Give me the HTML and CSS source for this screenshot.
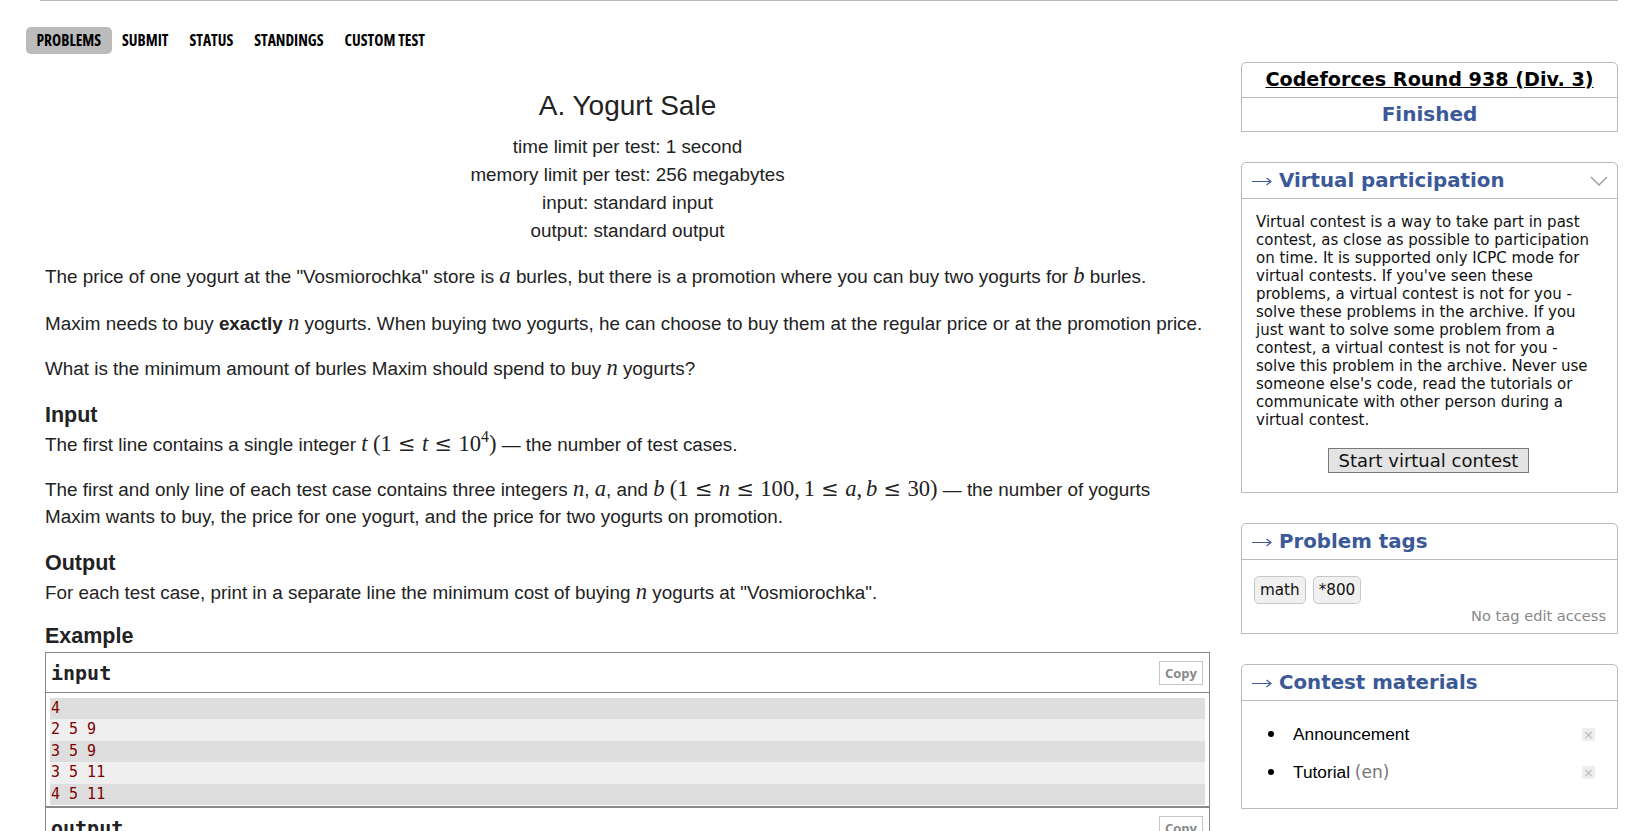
FILE: index.html
```html
<!DOCTYPE html>
<html lang="en">
<head>
<meta charset="utf-8">
<title>A. Yogurt Sale</title>
<link rel="stylesheet" href="styles.css">
</head>
<body>
<div class="topline"></div>
<nav class="menu">
  <ul>
    <li><a class="active" href="#">Problems</a></li>
    <li><a href="#">Submit</a></li>
    <li><a href="#">Status</a></li>
    <li><a href="#">Standings</a></li>
    <li><a href="#">Custom test</a></li>
  </ul>
</nav>
<div class="layout">
  <main class="statement">
    <div class="header">
      <div class="title">A. Yogurt Sale</div>
      <div class="meta">time limit per test: 1 second</div>
      <div class="meta">memory limit per test: 256 megabytes</div>
      <div class="meta">input: standard input</div>
      <div class="meta">output: standard output</div>
    </div>
    <p class="p-first">The price of one yogurt at the "Vosmiorochka" store is <span class="mj"><i>a</i></span> burles, but there is a promotion where you can buy two yogurts for <span class="mj"><i>b</i></span> burles.</p>
    <p>Maxim needs to buy <b>exactly</b> <span class="mj"><i>n</i></span> yogurts. When buying two yogurts, he can choose to buy them at the regular price or at the promotion price.</p>
    <p>What is the minimum amount of burles Maxim should spend to buy <span class="mj"><i>n</i></span> yogurts?</p>

    <div class="section-title">Input</div>
    <p>The first line contains a single integer <span class="mj"><i>t</i></span> <span class="mj">(1<span class="rel">≤</span><i>t</i><span class="rel">≤</span>10<sup>4</sup>)</span> — the number of test cases.</p>
    <p>The first and only line of each test case contains three integers <span class="mj"><i>n</i></span>, <span class="mj"><i>a</i></span>, and <span class="mj"><i>b</i></span> <span class="mj">(1<span class="rel">≤</span><i>n</i><span class="rel">≤</span>100<span class="punct">,</span>1<span class="rel">≤</span><i>a</i><span class="punct">,</span><i>b</i><span class="rel">≤</span>30)</span> — the number of yogurts Maxim wants to buy, the price for one yogurt, and the price for two yogurts on promotion.</p>

    <div class="section-title">Output</div>
    <p class="p-last">For each test case, print in a separate line the minimum cost of buying <span class="mj"><i>n</i></span> yogurts at "Vosmiorochka".</p>

    <div class="section-title">Example</div>
    <div class="sample">
      <div class="io">
        <div class="io-title"><span>input</span><button class="copy" type="button">Copy</button></div>
        <pre class="io-body"><div class="row odd">4</div><div class="row even">2 5 9</div><div class="row odd">3 5 9</div><div class="row even">3 5 11</div><div class="row odd">4 5 11</div></pre>
      </div>
      <div class="io io-out">
        <div class="io-title"><span>output</span><button class="copy" type="button">Copy</button></div>
        <pre class="io-body"><div class="row">9</div><div class="row">14</div><div class="row">15</div><div class="row">20</div></pre>
      </div>
    </div>
  </main>

  <aside class="sidebar">
    <div class="box">
      <div class="round"><a href="#">Codeforces Round 938 (Div. 3)</a></div>
      <div class="phase">Finished</div>
    </div>

    <div class="box">
      <div class="caption">
        <svg class="arrow" width="20" height="10" viewBox="0 0 20 10"><path d="M0 5.5H18.5M14.5 2L19 5.5L14.5 9" fill="none" stroke="#3b5998" stroke-width="1.2"/></svg>
        <span class="cap-text">Virtual participation</span>
        <svg class="chevron" width="18" height="10" viewBox="0 0 18 10"><polyline points="1,1 9,9 17,1" fill="none" stroke="#9a9a9a" stroke-width="1.3"/></svg>
      </div>
      <div class="virtual">
        <div class="virtual-text">Virtual contest is a way to take part in past contest, as close as possible to participation on time. It is supported only ICPC mode for virtual contests. If you've seen these problems, a virtual contest is not for you - solve these problems in the archive. If you just want to solve some problem from a contest, a virtual contest is not for you - solve this problem in the archive. Never use someone else's code, read the tutorials or communicate with other person during a virtual contest.</div>
        <div class="btn-wrap"><button class="start" type="button">Start virtual contest</button></div>
      </div>
    </div>

    <div class="box">
      <div class="caption">
        <svg class="arrow" width="20" height="10" viewBox="0 0 20 10"><path d="M0 5.5H18.5M14.5 2L19 5.5L14.5 9" fill="none" stroke="#3b5998" stroke-width="1.2"/></svg>
        <span class="cap-text">Problem tags</span>
      </div>
      <div class="tags">
        <div class="tag-list"><span class="tag">math</span><span class="tag">*800</span></div>
        <div class="tag-note">No tag edit access</div>
      </div>
    </div>

    <div class="box">
      <div class="caption">
        <svg class="arrow" width="20" height="10" viewBox="0 0 20 10"><path d="M0 5.5H18.5M14.5 2L19 5.5L14.5 9" fill="none" stroke="#3b5998" stroke-width="1.2"/></svg>
        <span class="cap-text">Contest materials</span>
      </div>
      <ul class="materials">
        <li><span class="mat-name">Announcement</span><span class="x">×</span></li>
        <li><span class="mat-name">Tutorial <span class="locale">(en)</span></span><span class="x">×</span></li>
      </ul>
    </div>
  </aside>
</div>
</body>
</html>
```

FILE: styles.css
```css
html, body {
  margin: 0;
  padding: 0;
  background: #fff;
}

body {
  font-family: "Liberation Sans", Arial, sans-serif;
  color: #222;
}

.topline {
  margin: 0 19px 0 40px;
  border-top: 1px solid #b8b8b8;
}

/* ---------- menu ---------- */
.menu {
  padding: 26px 0 0 26px;
}

.menu ul {
  display: flex;
  list-style: none;
  margin: 0;
  padding: 0;
}

.menu a {
  display: block;
  height: 27px;
  line-height: 27px;
  padding: 0 10.5px;
  font-family: "Open Sans", "DejaVu Sans Condensed", sans-serif;
  font-stretch: 75%;
  font-weight: bold;
  font-size: 15.5px;
  text-transform: uppercase;
  color: #000;
  text-decoration: none;
  border-radius: 5px;
}

.menu a.active {
  background: #bbb;
}

/* ---------- layout ---------- */
.layout {
  display: flex;
  align-items: flex-start;
  margin-top: 8px;
  padding-left: 45px;
}

.statement {
  width: 1165px;
  flex: none;
  padding-top: 28px;
  font-size: 18.85px;
}

.sidebar {
  width: 377px;
  flex: none;
  margin-left: 31px;
  font-family: "DejaVu Sans", Verdana, sans-serif;
  color: #111;
}

/* ---------- statement ---------- */
.header {
  text-align: center;
  margin-bottom: 18px;
}

.title {
  font-size: 28px;
  line-height: 32px;
  margin-bottom: 11px;
}

.meta {
  line-height: 28px;
}

.statement p {
  margin: 0 0 18px;
  line-height: 27px;
}

.statement p.p-first {
  margin-bottom: 20px;
}

.statement p.p-last {
  margin-bottom: 15px;
}

.section-title {
  font-size: 21.5px;
  font-weight: bold;
  line-height: 31px;
}

.mj {
  font-family: "Liberation Serif", "DejaVu Serif", serif;
  font-size: 1.2em;
  line-height: 1;
  white-space: nowrap;
}

.mj i {
  font-style: italic;
}

.mj .rel {
  font-family: "DejaVu Serif", serif;
  font-size: 0.93em;
  margin: 0 0.3em;
}

.mj .punct {
  margin-right: 0.167em;
}

.mj sup {
  font-size: 0.7em;
  vertical-align: 0.55em;
  line-height: 0;
}

/* ---------- sample ---------- */
.io {
  border: 1px solid #888;
}

.io-title {
  display: flex;
  align-items: center;
  justify-content: space-between;
  height: 39px;
  padding: 0 6px 0 5px;
  border-bottom: 1px solid #888;
  font-family: "DejaVu Sans Mono", "Liberation Mono", monospace;
  font-weight: bold;
  font-size: 20px;
  color: #222;
}

.copy {
  width: 44px;
  height: 24px;
  padding: 0;
  border: 1px solid #c4c4c4;
  background: #fff;
  color: #888;
  font-family: "Open Sans", "DejaVu Sans", sans-serif;
  font-weight: bold;
  font-size: 13px;
  line-height: 20px;
}

.io-body {
  margin: 0;
  padding: 5px 4px 1px;
  font-family: "DejaVu Sans Mono", "Liberation Mono", monospace;
  font-size: 15px;
  line-height: 21.4px;
  color: #800000;
}

.row {
  padding-left: 1px;
}

.row.odd {
  background: #dedede;
}

.row.even {
  background: #efefef;
}

/* ---------- sidebar ---------- */
.box {
  border: 1px solid #b9b9b9;
  border-radius: 5px 5px 0 0;
  margin-bottom: 30px;
}

.round {
  text-align: center;
  line-height: 34px;
  border-bottom: 1px solid #b9b9b9;
  font-weight: bold;
  font-size: 19.2px;
}

.round a {
  color: #000;
  text-decoration: underline;
}

.phase {
  text-align: center;
  line-height: 33px;
  font-weight: bold;
  font-size: 20px;
  color: #3b5998;
}

.caption {
  display: flex;
  align-items: center;
  height: 35px;
  padding: 0 9px 0 10px;
  border-bottom: 1px solid #b9b9b9;
  color: #3b5998;
  font-size: 19.8px;
}

.arrow {
  flex: none;
  margin-right: 7px;
  margin-top: 1px;
}

.cap-text {
  font-weight: bold;
}

.chevron {
  margin-left: auto;
}

.virtual {
  padding: 14px 16px 19px 14px;
}

.virtual-text {
  font-size: 15px;
  line-height: 18px;
}

.btn-wrap {
  text-align: center;
  margin-top: 19px;
}

.start {
  height: 25px;
  padding: 0 10px;
  border: 1px solid #7a7a7a;
  background: #e3e3e3;
  color: #111;
  font-family: "DejaVu Sans", Verdana, sans-serif;
  font-size: 18px;
  line-height: 22px;
}

.tags {
  padding: 16px 11px 8px 12px;
}

.tag-list {
  display: flex;
  gap: 7px;
}

.tag {
  display: block;
  height: 26px;
  line-height: 26px;
  padding: 0 5px;
  border: 1px solid #c8c8c8;
  border-radius: 5px;
  background: #f0f0f0;
  font-size: 15.2px;
  color: #111;
}

.tag-note {
  margin-top: 3px;
  text-align: right;
  font-size: 14.6px;
  line-height: 18px;
  color: #888;
}

.materials {
  list-style: none;
  margin: 0;
  padding: 14px 22px 17px 26px;
}

.materials li {
  display: flex;
  align-items: center;
  height: 38px;
  font-family: "Liberation Sans", Arial, sans-serif;
  font-size: 17.3px;
  color: #000;
}

.materials li::before {
  content: "";
  width: 6px;
  height: 6px;
  border-radius: 50%;
  background: #000;
  margin-right: 19px;
  flex: none;
}

.locale {
  font-family: "DejaVu Sans", Verdana, sans-serif;
  font-size: 17px;
  color: #777;
}

.x {
  margin-left: auto;
  width: 13px;
  height: 13px;
  background: #eee;
  color: #bbb;
  font-family: "DejaVu Sans", sans-serif;
  font-size: 13px;
  line-height: 13px;
  text-align: center;
}
```
